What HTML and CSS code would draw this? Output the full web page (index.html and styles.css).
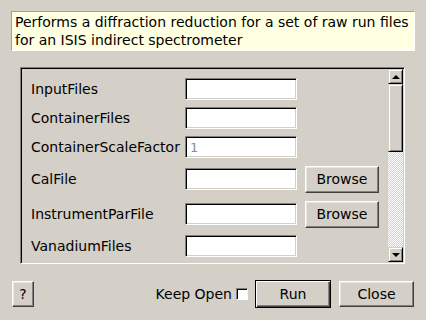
FILE: index.html
```html
<!DOCTYPE html>
<html lang="en">
<head>
    <meta charset="UTF-8">
    <title>DiffractionReduction input dialog</title>
    <link rel="stylesheet" href="styles.css">
</head>
<body>
    <div class="dialog">
        <div class="description">
            Performs a diffraction reduction for a set of raw run files<br>
            for an ISIS indirect spectrometer
        </div>

        <div class="props-frame">
            <div class="props">
                <div class="prop-row">
                    <span class="prop-label">InputFiles</span>
                    <input class="prop-input" type="text">
                </div>
                <div class="prop-row">
                    <span class="prop-label">ContainerFiles</span>
                    <input class="prop-input" type="text">
                </div>
                <div class="prop-row">
                    <span class="prop-label">ContainerScaleFactor</span>
                    <input class="prop-input default-value" type="text" value="1">
                </div>
                <div class="prop-row tall">
                    <span class="prop-label">CalFile</span>
                    <input class="prop-input" type="text">
                    <button class="btn browse-btn">Browse</button>
                </div>
                <div class="prop-row tall">
                    <span class="prop-label">InstrumentParFile</span>
                    <input class="prop-input" type="text">
                    <button class="btn browse-btn">Browse</button>
                </div>
                <div class="prop-row">
                    <span class="prop-label">VanadiumFiles</span>
                    <input class="prop-input" type="text">
                </div>
            </div>

            <div class="scrollbar">
                <div class="scroll-btn"><span class="arrow-up"></span></div>
                <div class="scroll-thumb"></div>
                <div class="scroll-track"></div>
                <div class="scroll-btn"><span class="arrow-down"></span></div>
            </div>
        </div>

        <div class="button-bar">
            <button class="btn help-btn">?</button>
            <div class="spacer"></div>
            <label class="keep-open">Keep Open <span class="checkbox"></span></label>
            <button class="btn run-btn">Run</button>
            <button class="btn close-btn">Close</button>
        </div>
    </div>
</body>
</html>
```

FILE: styles.css
```css
body {
    margin: 0;
    padding: 0;
    background-color: #d4d0c8;
    font-family: "DejaVu Sans", Verdana, sans-serif;
    font-size: 14px;
    color: #000;
}
.dialog {
    width: 426px;
    height: 320px;
    box-sizing: border-box;
    padding: 11px 11px 0 11px;
}
.description {
    height: 40px;
    box-sizing: border-box;
    padding: 1px 3px;
    line-height: 18px;
    background-color: #ffffe1;
    border: 1px solid;
    border-color: #a0a0a0 #fff #fff #a0a0a0;
    white-space: nowrap;
    overflow: hidden;
}

/* property list */
.props-frame {
    display: flex;
    margin: 16px 10px 0 9px;
    height: 197px;
    box-sizing: border-box;
    border: 1px solid;
    border-color: #808080 #fff #fff #808080;
    box-shadow: inset 1px 1px #000, inset -1px -1px #d4d0c8;
    padding: 1px;
}
.props {
    flex: 1;
    overflow: hidden;
    padding: 9px 0 0 9px;
    display: flex;
    flex-direction: column;
    gap: 7px;
}
.prop-row {
    display: flex;
    align-items: center;
    height: 22px;
    flex-shrink: 0;
}
.prop-row.tall {
    height: 28px;
}
.prop-label {
    width: 154px;
    white-space: nowrap;
}
.prop-input {
    width: 112px;
    height: 22px;
    box-sizing: border-box;
    margin: 0;
    padding: 2px 4px;
    font-family: inherit;
    font-size: 14px;
    background: #fff;
    border: 1px solid;
    border-color: #808080 #fff #fff #808080;
    box-shadow: inset 1px 1px #000, inset -1px -1px #d4d0c8;
    outline: none;
}
.default-value {
    color: #8c8c8c;
    font-family: "DejaVu Sans Mono", monospace;
    font-size: 13px;
}

/* buttons */
.btn {
    margin: 0;
    padding: 0;
    font-family: inherit;
    font-size: 14px;
    color: #000;
    background-color: #d4d0c8;
    border: 1px solid;
    border-color: #fff #404040 #404040 #fff;
    box-shadow: inset -1px -1px #808080, inset 1px 1px #e8e6e2;
    box-sizing: border-box;
}
.browse-btn {
    width: 74px;
    height: 27px;
    margin-left: 8px;
}

/* scrollbar */
.scrollbar {
    width: 15px;
    display: flex;
    flex-direction: column;
}
.scroll-btn,
.scroll-thumb {
    background-color: #d4d0c8;
    border: 1px solid;
    border-color: #d4d0c8 #000 #000 #d4d0c8;
    box-shadow: inset 1px 1px #fff, inset -1px -1px #808080;
    box-sizing: border-box;
}
.scroll-btn {
    height: 15px;
    display: flex;
    align-items: center;
    justify-content: center;
}
.scroll-thumb {
    height: 68px;
}
.scroll-track {
    flex: 1;
    background-color: #fff;
    background-image: repeating-conic-gradient(#d4d0c8 0 25%, #fff 0 50%);
    background-size: 2px 2px;
}
.arrow-up,
.arrow-down {
    width: 0;
    height: 0;
    border-left: 4px solid transparent;
    border-right: 4px solid transparent;
}
.arrow-up {
    border-bottom: 4px solid #000;
}
.arrow-down {
    border-top: 4px solid #000;
}

/* bottom bar */
.button-bar {
    display: flex;
    align-items: center;
    margin-top: 16px;
    height: 28px;
}
.help-btn {
    width: 22px;
    height: 26px;
    margin-left: 1px;
}
.spacer {
    flex: 1;
}
.keep-open {
    display: flex;
    align-items: center;
    gap: 4px;
    margin-right: 7px;
}
.checkbox {
    width: 12px;
    height: 12px;
    box-sizing: border-box;
    background: #fff;
    border: 1px solid;
    border-color: #808080 #fff #fff #808080;
    box-shadow: inset 1px 1px #000;
}
.run-btn {
    width: 76px;
    height: 28px;
    border: 1px solid #000;
    box-shadow: inset 1px 1px #fff, inset -1px -1px #404040, inset -2px -2px #808080;
}
.close-btn {
    width: 75px;
    height: 26px;
    margin-left: 8px;
    margin-right: 1px;
}
```
